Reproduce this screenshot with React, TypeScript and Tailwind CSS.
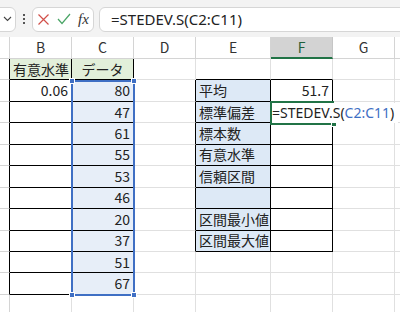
import React from 'react'

type Cell = { v?: string; align?: 'l' | 'r' | 'c'; fill?: string }

const colW = ['w-[62px]', 'w-[62px]', 'w-[62px]', 'w-[75px]', 'w-[62px]', 'w-[62px]']
const letters = ['B', 'C', 'D', 'E', 'F', 'G']

const labels = ['平均', '標準偏差', '標本数', '有意水準', '信頼区間', '', '区間最小値', '区間最大値']
const data = ['80', '47', '61', '55', '53', '46', '20', '37', '51', '67']

function cellAt(r: number, c: number): Cell {
  // r: 0 = row 1, c: 0 = column B
  if (r === 0 && c === 0) return { v: '有意水準', align: 'l', fill: 'bg-[#e2efda]' }
  if (r === 0 && c === 1) return { v: 'データ', align: 'c', fill: 'bg-[#e2efda]' }
  if (r === 1 && c === 0) return { v: '0.06', align: 'r' }
  if (c === 1 && r >= 1 && r <= 10) return { v: data[r - 1], align: 'r', fill: 'bg-[#e7eef8]' }
  if (c === 3 && r >= 1 && r <= 8) return { v: labels[r - 1], align: 'l', fill: 'bg-[#dde9f6]' }
  if (r === 1 && c === 4) return { v: '51.7', align: 'r' }
  return {}
}

function boxed(r: number, c: number) {
  if (r === 0 && (c === 0 || c === 1)) return true
  if ((c === 0 || c === 1) && r >= 1 && r <= 10) return true
  if ((c === 3 || c === 4) && r >= 1 && r <= 8) return true
  return false
}

function Handle({ className }: { className: string }) {
  return <div className={`absolute w-[6px] h-[6px] bg-[#3f6fc4] border border-white ${className}`} />
}

export default function App() {
  const rows = Array.from({ length: 12 }, (_, i) => i)

  return (
    <div className="w-[400px] h-[312px] overflow-hidden bg-white" style={{ fontFamily: '"Noto Sans CJK JP", "Noto Sans", sans-serif' }}>
      {/* formula bar */}
      <div className="h-[37px] bg-[#f3f3f3] flex items-center gap-[5px] pt-[1px]">
        <div className="ml-[-10px] w-[26px] h-[25px] bg-white border border-[#d6d6d6] rounded-md flex items-center justify-end pr-[2px]">
          <svg width="9" height="6" viewBox="0 0 9 6" className="mr-[1px]">
            <path d="M1 1l3.5 3.5L8 1" fill="none" stroke="#444" strokeWidth="1.1" />
          </svg>
        </div>
        <div className="flex flex-col gap-[2px] items-center w-[4px] mx-[1px]">
          <span className="w-[2px] h-[2px] bg-[#555]" />
          <span className="w-[2px] h-[2px] bg-[#555]" />
          <span className="w-[2px] h-[2px] bg-[#555]" />
        </div>
        <div className="w-[62px] h-[25px] bg-white border border-[#d6d6d6] rounded-md flex items-center pl-[4px] gap-[7px]">
          <svg width="13" height="13" viewBox="0 0 13 13">
            <path d="M1.5 1.5l10 10M11.5 1.5l-10 10" stroke="#d2504a" strokeWidth="1.2" />
          </svg>
          <svg width="14" height="12" viewBox="0 0 14 12">
            <path d="M1 6l4 4.5L13 1" fill="none" stroke="#4aa566" strokeWidth="1.2" />
          </svg>
          <span className="text-[15px] italic text-[#333] leading-none" style={{ fontFamily: '"Liberation Serif", serif' }}>
            fx
          </span>
        </div>
        <div className="flex-1 h-[25px] bg-white border border-[#d6d6d6] rounded-l-md mr-[-8px] flex items-center pl-[11px]">
          <span className="text-[15px] text-[#222]" style={{ fontFamily: '"Noto Sans", sans-serif' }}>
            =STEDEV.S(C2:C11)
          </span>
        </div>
      </div>

      {/* sheet */}
      <div className="relative">
        {/* column headers */}
        <div className="flex h-[22px]">
          <div className="w-[10px] shrink-0 border-r border-b border-[#d4d4d4]" />
          {letters.map((l, c) => (
            <div
              key={l}
              className={`${colW[c]} shrink-0 border-r flex items-center justify-center text-[14px] ${
                c === 4
                  ? 'bg-[#d3d3d3] border-b-2 border-b-[#217346] border-r-[#c6c6c6] text-[#1f5f3a]'
                  : 'border-b border-[#d4d4d4] text-[#333]'
              }`}
            >
              {l}
            </div>
          ))}
          <div className="flex-1 border-b border-[#d4d4d4]" />
        </div>

        {rows.map((r) => (
          <div key={r} className="flex h-[21.45px]">
            <div
              className={`w-[10px] shrink-0 border-b border-b-[#d4d4d4] border-r ${
                boxed(r, 0) ? 'border-r-black' : 'border-r-[#d4d4d4]'
              }`}
            />
            {letters.map((l, c) => {
              const cell = cellAt(r, c)
              const right = boxed(r, c) || boxed(r, c + 1)
              const bottom = boxed(r, c) || boxed(r + 1, c)
              return (
                <div
                  key={l}
                  className={`${colW[c]} shrink-0 border-r border-b flex items-center px-[3px] text-[14px] text-[#222] whitespace-nowrap overflow-hidden ${
                    cell.fill ?? ''
                  } ${right ? 'border-r-black' : 'border-r-[#e0e0e0]'} ${
                    bottom ? 'border-b-black' : 'border-b-[#e0e0e0]'
                  } ${cell.align === 'r' ? 'justify-end' : cell.align === 'c' ? 'justify-center' : 'justify-start'}`}
                >
                  {cell.v}
                </div>
              )
            })}
            <div className="flex-1 border-b border-[#e0e0e0]" />
          </div>
        ))}

        {/* range highlight C2:C11 */}
        <div className="absolute left-[71px] top-[42.5px] w-[64px] h-[216.5px] border-2 border-[#3f6fc4]">
          <Handle className="left-[-4px] top-[-4px]" />
          <Handle className="right-[-4px] top-[-4px]" />
          <Handle className="left-[-4px] bottom-[-4px]" />
          <Handle className="right-[-4px] bottom-[-4px]" />
        </div>

        {/* active cell F3, text spills over into G */}
        <div className="absolute left-[270px] top-[64px] w-[64px] h-[23.5px] border-2 border-r-0 border-[#217346] bg-white">
          <div className="absolute right-[-3px] bottom-[-4px] w-[6px] h-[6px] bg-[#217346] border border-white" />
        </div>
        <div className="absolute left-[272px] top-[66px] h-[19.5px] pr-[4px] flex items-center bg-white text-[14px] text-[#222] whitespace-nowrap" style={{ fontFamily: '"Noto Sans", sans-serif' }}>
          =STEDEV.S(<span className="text-[#3f6fc4]">C2:C11</span>)
        </div>
      </div>
    </div>
  )
}
